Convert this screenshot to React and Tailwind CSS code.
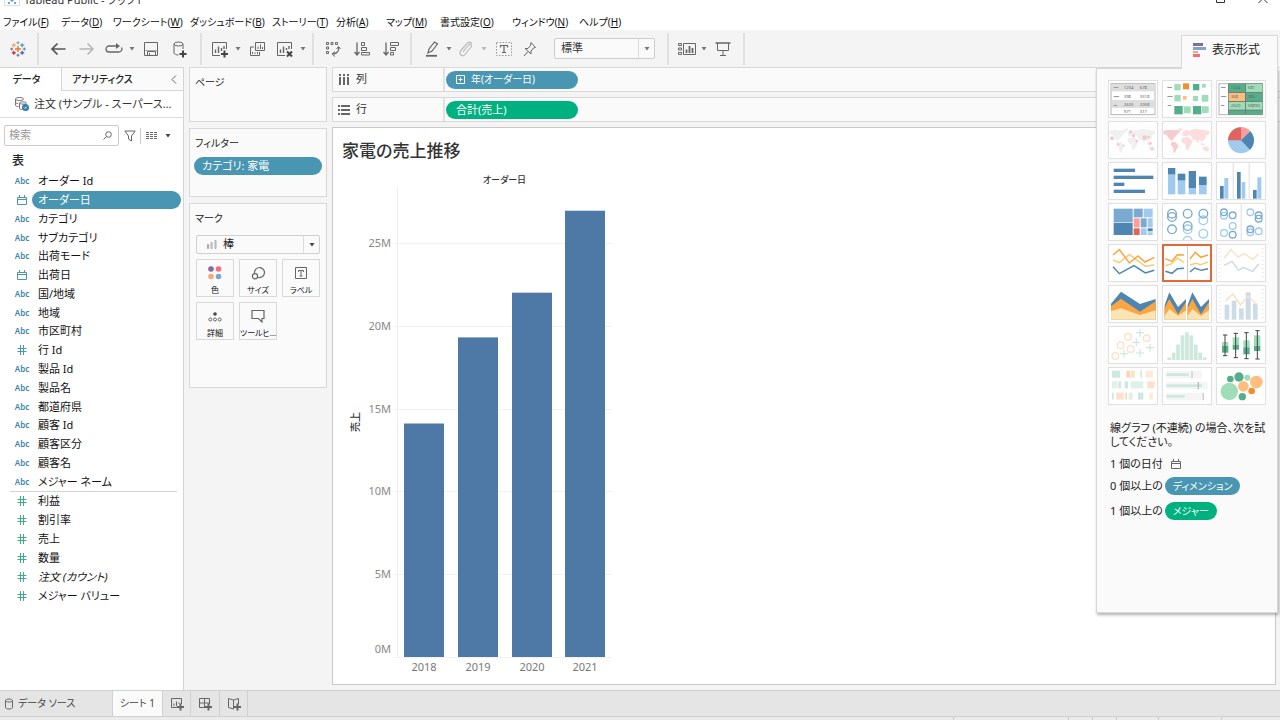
import { useState } from 'react'

const MENUS = [
  { label: 'ファイル', key: 'F' },
  { label: 'データ', key: 'D' },
  { label: 'ワークシート', key: 'W' },
  { label: 'ダッシュボード', key: 'B' },
  { label: 'ストーリー', key: 'T' },
  { label: '分析', key: 'A' },
  { label: 'マップ', key: 'M' },
  { label: '書式設定', key: 'O' },
  { label: 'ウィンドウ', key: 'N' },
  { label: 'ヘルプ', key: 'H' }
]

const DIMENSIONS = [
  { name: 'オーダー Id', type: 'text' },
  { name: 'オーダー日', type: 'date' },
  { name: 'カテゴリ', type: 'text' },
  { name: 'サブカテゴリ', type: 'text' },
  { name: '出荷モード', type: 'text' },
  { name: '出荷日', type: 'date' },
  { name: '国/地域', type: 'text' },
  { name: '地域', type: 'text' },
  { name: '市区町村', type: 'text' },
  { name: '行 Id', type: 'number' },
  { name: '製品 Id', type: 'text' },
  { name: '製品名', type: 'text' },
  { name: '都道府県', type: 'text' },
  { name: '顧客 Id', type: 'text' },
  { name: '顧客区分', type: 'text' },
  { name: '顧客名', type: 'text' },
  { name: 'メジャー ネーム', type: 'text' }
]

const MEASURES = [
  { name: '利益' },
  { name: '割引率' },
  { name: '売上' },
  { name: '数量' },
  { name: '注文 (カウント)', italic: true },
  { name: 'メジャー バリュー' }
]

const SALES = [
  { year: '2018', value: 14.1 },
  { year: '2019', value: 19.3 },
  { year: '2020', value: 22 },
  { year: '2021', value: 26.95 }
]

// ---------- icons ----------

const Icon = ({ w = 16, h = 16, className = 'text-[#666]', children }) => (
  <svg
    width={w}
    height={h}
    viewBox={`0 0 ${w} ${h}`}
    fill="none"
    stroke="currentColor"
    className={`shrink-0 ${className}`}
    aria-hidden="true"
  >
    {children}
  </svg>
)

const Caret = ({ className = 'text-[#777]' }) => (
  <Icon w={6} h={4} className={className}>
    <path d="M.5 0h5L3 3.500z" fill="currentColor" stroke="none" />
  </Icon>
)

const Plus = ({ x, y, color = '#444' }) => (
  <path d={`M${x - 3.5} ${y}h7M${x} ${y - 3.5}v7`} stroke={color} strokeWidth="2" />
)

const CROSSES = [
  { x: 8, y: 8, r: 3, c: '#e8762b', w: 1.4 },
  { x: 3.8, y: 4.2, r: 2, c: '#e8a05a', w: 1.2 },
  { x: 12.2, y: 4.2, r: 2, c: '#5b9aa8', w: 1.2 },
  { x: 3.8, y: 11.8, r: 2, c: '#c72035', w: 1.2 },
  { x: 12.2, y: 11.8, r: 2, c: '#3b5c9a', w: 1.2 },
  { x: 8, y: 1.8, r: 1.6, c: '#6aa3b8', w: 1 },
  { x: 8, y: 14.2, r: 1.6, c: '#6a6fa8', w: 1 },
  { x: 1.7, y: 8, r: 1.5, c: '#7a6a90', w: 1 },
  { x: 14.3, y: 8, r: 1.5, c: '#5b7ab0', w: 1 }
]

const LogoIcon = () => (
  <Icon>
    {CROSSES.map(({ x, y, r, c, w }) => (
      <path key={`${x}-${y}`} d={`M${x - r} ${y}h${r * 2}M${x} ${y - r}v${r * 2}`} stroke={c} strokeWidth={w} />
    ))}
  </Icon>
)

const BackIcon = () => (
  <Icon><path d="M15.500 8H2M7.500 2.500L2 8l5.500 5.500" strokeWidth="1.700" stroke="#555" /></Icon>
)

const ForwardIcon = () => (
  <Icon className="text-[#b4b4b4]"><path d="M.5 8h13M8.500 2.500L14 8l-5.500 5.500" strokeWidth="1.500" /></Icon>
)

const ReplayIcon = () => (
  <Icon w={18} h={12}>
    <path d="M12 3H4a3 3 0 0 0 0 6h10a3 3 0 0 0 2.500-4.500" strokeWidth="1.300" />
    <path d="M11 0l4 3-4 3z" fill="currentColor" stroke="none" />
  </Icon>
)

const SaveIcon = () => (
  <Icon>
    <path d="M1.500 1.500h13v13h-13zM4.500 14.500v-4h8v4M6.500 12v2.500" />
    <path d="M2 9.500h12" stroke="#aaa" />
  </Icon>
)

const DatabaseAddIcon = () => (
  <Icon w={18} h={18}>
    <ellipse cx="7.500" cy="4" rx="4.500" ry="2" />
    <path d="M3 4v9c0 1 2 2 4.500 2M12 4v5" />
    <Plus x={12} y={14} />
  </Icon>
)

const SheetAddIcon = () => (
  <Icon w={18} h={18}>
    <path d="M9 15.500H1.500v-13h14V9" />
    <path d="M4.500 13V9.500M7.500 13V6.500M10.500 11V8M13 9V6" strokeWidth="1.400" />
    <Plus x={13.5} y={14} />
  </Icon>
)

const DuplicateIcon = () => (
  <Icon>
    <path d="M6.500 1.500h9v8h-9zM5 6H1.500v8.500h9V11" />
    <path d="M9 8V5.500M11.500 8V3.500M13.500 8V6M3.500 13v-2M6 13v-1.500M8.500 13v-2" />
  </Icon>
)

const ClearIcon = () => (
  <Icon w={18} h={18}>
    <path d="M9 15.500H1.500v-13h14V9" />
    <path d="M4.500 13V9.500M7.500 13V6.500M10.500 10V8M13 9V6" strokeWidth="1.400" />
    <path d="M11 11.500l5 5M16 11.500l-5 5" stroke="#444" strokeWidth="2" />
  </Icon>
)

const SwapIcon = () => (
  <Icon>
    <path d="M1.500 1.500h2v2h-2zM6 1.500h2v2H6zM10.500 1.500h2v2h-2zM1.500 6h2v2h-2zM1.500 10.500h2v2h-2z" />
    <path d="M13.500 6c1 4-2 7-6 7" strokeWidth="1.200" />
    <path d="M10 10.500L7 13l3 2.500M11.500 8l2-2.500 2 2.500" />
  </Icon>
)

const SortAscIcon = () => (
  <Icon>
    <path d="M3 1.500V14M.5 11L3 14l2.500-3" strokeWidth="1.300" />
    <path d="M7.500 1.500h3v3h-3zM7.500 6.500h5v3h-5zM7.500 11.500h8v2.500h-8z" />
  </Icon>
)

const SortDescIcon = () => (
  <Icon>
    <path d="M3 1.500V14M.5 11L3 14l2.500-3" strokeWidth="1.300" />
    <path d="M7.500 1.500h8v3h-8zM7.500 6.500h5v3h-5zM7.500 11.500h3v2.500h-3z" />
  </Icon>
)

const PenIcon = () => (
  <Icon>
    <path d="M4 12l1-4 5.500-7 3 2L8 10z" strokeWidth="1.200" />
    <path d="M2 14.800h11" strokeWidth="1.800" />
  </Icon>
)

const ClipIcon = () => (
  <Icon className="text-[#b8b8b8]">
    <path d="M5 11l5.500-7a1.500 1.500 0 0 1 2.500 2l-6 7.500a2.800 2.800 0 0 1-4.500-3.500L8.500 3a3.600 3.600 0 0 1 5.500-.5" strokeWidth="1.200" />
  </Icon>
)

const TextIcon = () => (
  <Icon>
    <path d="M.5 1.500h15v13H.5z" strokeDasharray="1.500 1.500" stroke="#999" />
    <path d="M4.500 6.500v-2h7v2M8 4.500v7M6 11.500h4" strokeWidth="1.200" />
  </Icon>
)

const PinIcon = () => (
  <Icon w={14} h={16}>
    <path d="M8 1.500l4.500 5-2 .5-2.500 3v3L2 7.500h3l2.500-3zM5 10.500L1 15" />
  </Icon>
)

const CardsIcon = () => (
  <Icon w={20} h={14}>
    <path d="M1.500 1.500h3v2h-3zM1.500 6h3v2h-3zM1.500 10.500h3v2h-3zM6.500 1.500h12v11h-12z" />
    <path d="M9.500 11V7.500M12.500 11V4M15.500 11V6" strokeWidth="1.800" />
  </Icon>
)

const PresentIcon = () => (
  <Icon>
    <path d="M.5 2h15" strokeWidth="1.500" />
    <path d="M2.500 2v7.500h11V2M8 9.500V14M5 14.500h6" />
  </Icon>
)

const CalendarIcon = ({ className }) => (
  <Icon w={10} h={10} className={className}>
    <path d="M.5 2.500h9v7h-9zM.5 4.500h9M2.500 0v2.500M7.500 0v2.500" />
  </Icon>
)

const HashIcon = ({ className }) => (
  <Icon w={10} h={10} className={className}>
    <path d="M3.500 0v10M6.500 0v10M.5 3.500h9M.5 6.500h9" />
  </Icon>
)

const ShowMeIcon = () => (
  <Icon w={14} h={14}>
    <g stroke="none">
      <path d="M1 0h10v3H1z" fill="#85689c" />
      <path d="M1 4h13v3H1z" fill="#7da5cf" />
      <path d="M1 8h5v2H1z" fill="#f8a878" />
      <path d="M1 11h7v3H1z" fill="#fb6a7b" />
    </g>
  </Icon>
)

// ---------- toolbar ----------

const ToolGroup = ({ className = '', children }) => (
  <div className={`flex h-8 items-center border-r-2 border-[#e0e0e0] ${className}`}>{children}</div>
)

const Tool = ({ label, className, children }) => (
  <button type="button" aria-label={label} className={`flex h-7 shrink-0 items-center justify-center ${className}`}>
    {children}
  </button>
)

const TitleBar = () => (
  <header className="flex h-3.5 items-end justify-between overflow-hidden bg-white pr-3 pb-1.5 pl-1">
    <div className="flex items-center gap-1">
      <div className="border border-[#ddd] px-0.5">
        <Icon w={10} h={10}>
          <path d="M5 3v4M3 5h4M2 1v2M8 1v2M2 7v2M8 7v2M1 2h2M7 2h2M1 8h2M7 8h2" stroke="#3f86b8" />
        </Icon>
      </div>
      <span className="text-[11px] leading-4 text-[#333]">Tableau Public - ブック1</span>
    </div>
    <div className="flex items-end gap-8">
      <button type="button" aria-label="最大化">
        <Icon w={10} h={14}><path d="M.5.500h8v8h-8z" stroke="#333" /></Icon>
      </button>
      <button type="button" aria-label="閉じる">
        <Icon w={10} h={14}><path d="M.5 0l9 9M9.500 0l-9 9" stroke="#333" /></Icon>
      </button>
    </div>
  </header>
)

const MenuBar = () => (
  <nav className="grid h-4 grid-cols-[58px_52px_77px_82px_64px_50px_54px_72px_67px_auto] justify-start bg-white pl-[3px]">
    {MENUS.map(({ label, key }) => (
      <button key={key} type="button" className="text-left text-[10px] leading-4 whitespace-nowrap text-[#111]">
        {label}(<u>{key}</u>)
      </button>
    ))}
  </nav>
)

const Toolbar = () => (
  <div className="flex h-[37px] shrink-0 items-center">
    <ToolGroup className="pr-px">
      <Tool label="スタート ページ" className="w-9"><LogoIcon /></Tool>
    </ToolGroup>
    <ToolGroup className="pr-1.5 pl-[5px]">
      <Tool label="元に戻す" className="w-7"><BackIcon /></Tool>
      <Tool label="やり直し" className="w-[29px]"><ForwardIcon /></Tool>
      <Tool label="リプレイ" className="w-[26px]"><ReplayIcon /></Tool>
      <Tool label="リプレイのオプション" className="w-2.5"><Caret /></Tool>
      <Tool label="保存" className="w-7"><SaveIcon /></Tool>
      <Tool label="新しいデータ ソース" className="w-[29px]"><DatabaseAddIcon /></Tool>
    </ToolGroup>
    <ToolGroup className="px-1">
      <Tool label="新しいワークシート" className="w-7"><SheetAddIcon /></Tool>
      <Tool label="新規作成のオプション" className="w-2"><Caret /></Tool>
      <Tool label="複製" className="w-[30px]"><DuplicateIcon /></Tool>
      <Tool label="シートのクリア" className="w-[26px]"><ClearIcon /></Tool>
      <Tool label="クリアのオプション" className="w-2.5"><Caret /></Tool>
    </ToolGroup>
    <ToolGroup className="px-1">
      <Tool label="行と列の交換" className="w-[30px]"><SwapIcon /></Tool>
      <Tool label="昇順で並べ替え" className="w-7"><SortAscIcon /></Tool>
      <Tool label="降順で並べ替え" className="w-[30px]"><SortDescIcon /></Tool>
    </ToolGroup>
    <ToolGroup className="pr-3 pl-2">
      <Tool label="ハイライト" className="w-6"><PenIcon /></Tool>
      <Tool label="ハイライトのオプション" className="w-2.5"><Caret /></Tool>
      <Tool label="メンバーのグループ化" className="w-6"><ClipIcon /></Tool>
      <Tool label="グループのオプション" className="w-3"><Caret className="text-[#b8b8b8]" /></Tool>
      <Tool label="マーク ラベルの表示" className="w-7"><TextIcon /></Tool>
      <Tool label="軸の固定" className="w-6"><PinIcon /></Tool>
      <div className="relative ml-3 flex h-[21px] w-[101px] items-center rounded-xs border border-[#ccc] bg-[#fafafa]">
        <select aria-label="適合" className="h-full w-full appearance-none pl-1.5 text-[11px] text-[#333]">
          <option>標準</option>
          <option>幅を合わせる</option>
          <option>高さを合わせる</option>
          <option>ビュー全体</option>
        </select>
        <span className="pointer-events-none absolute inset-y-0 right-0 flex w-4 items-center justify-center border-l border-[#ddd]">
          <Caret />
        </span>
      </div>
    </ToolGroup>
    <ToolGroup className="px-1.5">
      <Tool label="カードの表示" className="w-6"><CardsIcon /></Tool>
      <Tool label="カードのオプション" className="w-2.5"><Caret /></Tool>
      <Tool label="プレゼンテーション モード" className="w-7"><PresentIcon /></Tool>
    </ToolGroup>
  </div>
)

// ---------- data pane ----------

const FieldIcon = ({ type, measure }) => {
  if (type === 'date') return <CalendarIcon className="text-[#4996b2]" />
  if (type === 'number') return <HashIcon className={measure ? 'text-[#3fae86]' : 'text-[#4996b2]'} />
  return <span className="text-[8px] font-semibold text-[#3a86a4]">Abc</span>
}

const Field = ({ name, type, measure, italic, selected, onSelect }) => (
  <li className="flex items-center pr-0.5">
    <span className="flex w-8 shrink-0 items-center justify-center pl-3">
      <FieldIcon type={type} measure={measure} />
    </span>
    <button
      type="button"
      onClick={onSelect}
      className={`h-[18px] min-w-0 flex-1 rounded-full pl-1.5 text-left text-[11px] leading-[18px] whitespace-nowrap ${
        selected ? 'bg-[#4996b2] text-white' : 'text-[#111]'
      } ${italic ? 'italic' : ''}`}
    >
      {name}
    </button>
  </li>
)

const DataPane = () => {
  const [selected, setSelected] = useState('オーダー日')

  return (
    <aside className="w-[184px] shrink-0 border-r border-[#d4d4d4] bg-white">
      <div className="flex h-6 border-t border-[#d4d4d4] text-[10px] font-medium">
        <button type="button" className="w-[61px] pr-2 text-[#222]">データ</button>
        <div className="flex flex-1 items-center justify-between border-b border-l border-[#d4d4d4] bg-[#fafafa] pr-1.5 pl-2.5">
          <button type="button" className="whitespace-nowrap text-[#222]">アナリティクス</button>
          <button type="button" aria-label="ペインを折りたたむ">
            <Icon w={6} h={9}><path d="M5 .5l-4 4 4 4" /></Icon>
          </button>
        </div>
      </div>

      <button type="button" className="flex h-[27px] w-full items-center gap-1 border-b border-[#ddd] pl-3.5 text-[11px] whitespace-nowrap text-[#333]">
        <Icon>
          <path d="M1.500 3v6c0 1 1 1.500 3 1.500M1.500 3c0-2 8-2 8 0s-8 2-8 0M1.500 6c0 1 1 1.500 2.500 1.500" stroke="#777" />
          <path d="M5.500 7v5c0 1 1 1.500 3 1.500M5.500 7c0-1.500 7-1.500 7 0s-7 1.500-7 0" stroke="#777" />
          <circle cx="11.500" cy="11.500" r="3.500" fill="#2f7fa8" stroke="none" />
          <path d="M10 11.500l1 1 2-2" stroke="#fff" />
        </Icon>
        注文 (サンプル - スーパース…
      </button>

      <div className="flex items-center pt-[7px] pl-1">
        <label className="flex h-[21px] w-[115px] items-center rounded-xs border border-[#ccc] pr-1.5 pl-1">
          <input type="text" aria-label="検索" placeholder="検索" className="min-w-0 flex-1 text-[11px] outline-none placeholder:text-[#999]" />
          <Icon w={9} h={9}><circle cx="5.500" cy="3.500" r="2.800" /><path d="M3.500 5.500L.5 8.500" /></Icon>
        </label>
        <button type="button" aria-label="フィルター" className="flex w-[22px] justify-center border-r border-[#ccc] py-0.5">
          <Icon w={12} h={12}><path d="M.8 1h10.400L7.500 6v5L4.500 9V6z" /></Icon>
        </button>
        <button type="button" aria-label="表示" className="flex w-[30px] items-center justify-between pl-[5px]">
          <Icon w={12} h={8}>
            <path d="M0 .500h12M0 2.500h12M0 4.500h12M0 6.500h12" strokeDasharray="3 1 3 1" />
          </Icon>
          <Caret className="text-[#444]" />
        </button>
      </div>

      <h2 className="pt-[5px] pb-px pl-3 text-[12px] leading-5 font-medium text-[#222]">表</h2>
      <ul className="grid h-[319px] auto-rows-fr">
        {DIMENSIONS.map((f) => (
          <Field key={f.name} {...f} selected={selected === f.name} onSelect={() => setSelected(f.name)} />
        ))}
      </ul>
      <hr className="mr-1.5 ml-2.5 border-[#d4d4d4]" />
      <ul className="grid h-[113px] auto-rows-fr">
        {MEASURES.map((f) => (
          <Field key={f.name} {...f} type="number" measure selected={selected === f.name} onSelect={() => setSelected(f.name)} />
        ))}
      </ul>
    </aside>
  )
}

// ---------- cards ----------

const Card = ({ title, className, children }) => (
  <section className={`border border-[#d8d8d8] bg-[#fafafa] px-1 text-[11px] ${className}`}>
    <h2 className="px-px pt-[5px] text-[10px] leading-[18px] text-[#222]">{title}</h2>
    {children}
  </section>
)

const MarkButton = ({ label, children }) => (
  <button type="button" className="flex h-[38px] flex-col items-center justify-between border border-[#d8d8d8] bg-[#fafafa] pt-1.5">
    {children}
    <span className="text-[8px] leading-3 whitespace-nowrap text-[#111]">{label}</span>
  </button>
)

const CardColumn = () => (
  <div className="flex w-[138px] shrink-0 flex-col gap-1.5">
    <Card title="ページ" className="h-[55px]" />
    <Card title="フィルター" className="h-[69px]">
      <button type="button" className="mt-[5px] h-[18px] w-full rounded-full bg-[#4996b2] pl-2 text-left leading-[18px] text-white">
        カテゴリ: 家電
      </button>
    </Card>
    <Card title="マーク" className="h-[185px]">
      <div className="px-0.5 pt-2">
        <div className="relative flex h-[19px] items-center rounded-xs border border-[#d0d0d0] bg-[#fafafa]">
          <Icon w={10} h={9} className="ml-2.5 text-[#aaa]">
            <path d="M.5 8.500v-4h1v4zM4 8.500v-6h1v6zM8 8.500V.5h1v8z" />
          </Icon>
          <select aria-label="マーク タイプ" className="h-full min-w-0 flex-1 appearance-none pl-1.5 text-[11px] text-[#222]">
            <option>棒</option>
            <option>線</option>
            <option>円</option>
          </select>
          <span className="pointer-events-none absolute inset-y-0 right-0 flex w-4 items-center justify-center border-l border-[#ddd]">
            <Caret className="text-[#444]" />
          </span>
        </div>
        <div className="mt-[5px] grid grid-cols-3 gap-[5px]">
          <MarkButton label="色">
            <Icon w={14} h={14}>
              <g stroke="none">
                <circle cx="3" cy="3" r="2.800" fill="#85689c" />
                <circle cx="10.500" cy="3" r="2.800" fill="#fb6a7b" />
                <circle cx="3" cy="10.500" r="2.800" fill="#f8a878" />
                <circle cx="10.500" cy="10.500" r="2.800" fill="#7da5cf" />
              </g>
            </Icon>
          </MarkButton>
          <MarkButton label="サイズ">
            <Icon w={14} h={14}>
              <path d="M3.500 7A5 5 0 1 1 7 11.300" strokeWidth="1.200" />
              <circle cx="4" cy="10.300" r="2.600" strokeWidth="1.200" />
            </Icon>
          </MarkButton>
          <MarkButton label="ラベル">
            <Icon w={14} h={14}>
              <path d="M1.500 1.500h11v11h-11zM4.500 6V4.500h5V6M7 4.500v5.500M5.500 10h3" />
            </Icon>
          </MarkButton>
          <MarkButton label="詳細">
            <Icon w={14} h={14}>
              <circle cx="7" cy="5" r="1.800" fill="#444" stroke="none" />
              <circle cx="2.300" cy="10.500" r="1.500" />
              <circle cx="7" cy="10.500" r="1.500" />
              <circle cx="11.700" cy="10.500" r="1.500" />
            </Icon>
          </MarkButton>
          <MarkButton label="ツールヒ…">
            <Icon w={14} h={14}>
              <path d="M1 1.500h12v8h-2V13L7.500 9.500H1z" strokeWidth="1.200" />
            </Icon>
          </MarkButton>
        </div>
      </div>
    </Card>
  </div>
)

// ---------- view ----------

const Shelf = ({ label, icon, children }) => (
  <div className="flex h-[25px] shrink-0 items-center border border-r-0 border-[#d8d8d8] bg-[#fafafa] text-[11px]">
    <div className="flex h-full w-[112px] items-center gap-1.5 border-r-2 border-[#e2e2e2] pl-[5px] text-[#333]">
      {icon}
      {label}
    </div>
    {children}
  </div>
)

const BarChart = () => {
  const left = 56
  const right = 271
  const top = 22
  const bottom = 492
  const perMillion = 16.56
  const step = (right - left) / SALES.length

  return (
    <svg width="272" height="512" viewBox="0 0 272 512" role="img" aria-label="家電の売上推移">
      <text x={(left + right) / 2} y="18" textAnchor="middle" fontSize="9" fontWeight="500" fill="#333">オーダー日</text>
      <text transform="translate(18 257) rotate(-90)" textAnchor="middle" fontSize="10" fontWeight="500" fill="#333">売上</text>
      {[0, 5, 10, 15, 20, 25].map((tick) => {
        const y = Math.round(bottom - tick * perMillion)
        return (
          <g key={tick}>
            <path d={`M${left - 4} ${y + 0.5}H${right}`} stroke="#f2f2f2" />
            <text x={left - 6} y={tick === 0 ? y - 4 : y + 4} textAnchor="end" fontSize="11" fill="#888">{tick}M</text>
          </g>
        )
      })}
      <path d={`M${left + 0.5} ${top}V${bottom}`} stroke="#eee" />
      {SALES.map(({ year, value }, i) => {
        const x = Math.round(left + step * i + 7)
        const height = value * perMillion
        return (
          <g key={year}>
            <rect x={x} y={bottom - height} width="40" height={height} fill="#4e79a7" />
            <text x={x + 20} y={bottom + 14} textAnchor="middle" fontSize="11" fill="#777">{year}</text>
          </g>
        )
      })}
    </svg>
  )
}

const Worksheet = () => (
  <main className="flex min-w-0 flex-1 flex-col gap-[5px]">
    <Shelf
      label="列"
      icon={
        <Icon w={12} h={12}>
          <path d="M2 0v2M6 0v2M10 0v2M2 3v8M6 3v8M10 3v8" strokeWidth="2" />
        </Icon>
      }
    >
      <button type="button" className="ml-px flex h-[18px] w-[132px] items-center gap-1.5 rounded-full bg-[#4996b2] pl-2.5 text-[10px] text-white">
        <Icon w={9} h={9} className="text-white"><path d="M.5.500h8v8h-8zM2.500 4.500h4M4.500 2.500v4" /></Icon>
        年(オーダー日)
      </button>
    </Shelf>
    <Shelf
      label="行"
      icon={
        <Icon w={12} h={12}>
          <path d="M0 2h2M0 6h2M0 10h2M3 2h9M3 6h9M3 10h9" strokeWidth="2" />
        </Icon>
      }
    >
      <button type="button" className="ml-px h-[18px] w-[132px] rounded-full bg-[#00b180] pl-2.5 text-left leading-[18px] text-white">
        合計(売上)
      </button>
    </Shelf>
    <section className="mr-1 mb-[5px] flex-1 border border-[#c8c8c8] bg-white px-2 pt-[9px]">
      <h1 className="h-7 pl-px text-[17px] leading-7 font-medium text-[#333]">家電の売上推移</h1>
      <BarChart />
    </section>
  </main>
)

// ---------- show me ----------

const DARK = '#4e85b3'
const MID = '#7aaad0'
const LIGHT = '#a0cbef'
const GREEN = '#55ae8b'
const PALE_GREEN = '#9fdcb8'
const ORANGE = '#f28e2b'
const PALE_ORANGE = '#ffbe7d'
const FADED_GREEN = '#cde8dc'
const FADED_ORANGE = '#fde0c8'
const FADED_BLUE = '#cddbe8'

const Rects = ({ items }) =>
  items.map(([x, y, width, height, fill], i) => <rect key={i} x={x} y={y} width={width} height={height} fill={fill} />)

const Rings = ({ items, r }) =>
  items.map(([cx, cy, stroke], i) => <circle key={i} cx={cx} cy={cy} r={r} stroke={stroke} strokeWidth="4" fill="none" />)

const Lines = ({ items }) =>
  items.map(([points, stroke], i) => <polyline key={i} points={points} stroke={stroke} strokeWidth="4.500" fill="none" />)

const Areas = ({ items }) => items.map(([points, fill], i) => <polygon key={i} points={points} fill={fill} />)

const Digits = ({ items }) =>
  items.map(([x, y, text], i) => (
    <text key={i} x={x} y={y} fontSize="13" fill="#666">{text}</text>
  ))

const WORLD = [
  '4,30 18,26 34,28 46,27 54,32 44,42 36,52 30,60 22,54 14,42 4,38',
  '46,24 58,22 62,25 54,32',
  '28,62 40,64 50,74 44,84 38,96 34,94 34,80 27,72',
  '64,30 74,26 84,30 84,40 74,46 62,44 60,38',
  '62,50 78,48 88,56 92,62 84,76 78,88 72,86 70,70 60,64 58,56',
  '84,28 100,24 122,26 142,30 142,38 134,42 130,52 120,62 112,56 108,68 102,56 92,56 88,46 82,42',
  '118,66 128,70 124,74 116,70',
  '122,78 134,76 142,84 138,92 124,88'
]

const CHART_TYPES = [
  {
    label: 'テキスト テーブル',
    art: (
      <>
        <rect x="9" y="11" width="132" height="93" fill="#fff" stroke="#b4b4b4" strokeWidth="3" />
        <Rects items={[[11, 12, 129, 22, '#dedede'], [11, 60, 129, 24, '#dedede'], [17, 21, 14, 3, '#999'], [17, 48, 16, 3, '#999'], [17, 75, 11, 3, '#999']]} />
        <Digits items={[[47, 28, '1234'], [95, 28, '678'], [47, 54, '398'], [95, 54, '3518'], [47, 78, '2620'], [95, 78, '2058'], [47, 99, '971'], [95, 99, '317']]} />
      </>
    )
  },
  {
    label: 'ヒート マップ',
    art: (
      <Rects
        items={[
          [16, 21, 14, 3, '#999'], [16, 48, 16, 3, '#999'], [17, 75, 10, 3, '#999'],
          [37, 12, 19, 19, PALE_GREEN], [63, 10, 18, 18, ORANGE], [93, 12, 19, 19, GREEN], [120, 12, 11, 11, PALE_GREEN],
          [37, 45, 19, 19, PALE_GREEN], [63, 48, 11, 11, PALE_ORANGE], [93, 48, 15, 15, PALE_GREEN], [119, 45, 20, 20, PALE_GREEN],
          [37, 78, 25, 25, GREEN], [65, 79, 21, 21, PALE_GREEN], [93, 78, 25, 25, GREEN], [120, 79, 20, 20, PALE_GREEN]
        ]}
      />
    )
  },
  {
    label: 'ハイライト表',
    art: (
      <>
        <rect x="9" y="11" width="131" height="93" fill="#fff" stroke="#b4b4b4" strokeWidth="3" />
        <Rects
          items={[
            [15, 21, 14, 3, '#999'], [15, 48, 16, 3, '#999'], [15, 75, 10, 3, '#999'],
            [36, 10, 104, 94, '#6f8078'],
            [38, 12, 49, 24, GREEN], [90, 12, 49, 24, PALE_GREEN],
            [38, 39, 49, 24, PALE_ORANGE], [90, 39, 49, 24, GREEN],
            [38, 66, 49, 23, PALE_GREEN], [90, 66, 49, 23, PALE_GREEN],
            [38, 92, 49, 11, GREEN], [90, 92, 49, 11, GREEN]
          ]}
        />
        <Digits items={[[44, 28, '1234'], [95, 28, '581'], [44, 55, '368'], [95, 55, '380'], [44, 82, '2620'], [95, 82, '58890']]} />
      </>
    )
  },
  {
    label: '記号マップ',
    art: (
      <>
        <Areas items={WORLD.map((p) => [p, '#f0f0f0'])} />
        <g fill="#f4c9cc">
          <circle cx="12" cy="52" r="6" />
          <circle cx="67" cy="33" r="5" />
          <circle cx="77" cy="44" r="5" />
          <circle cx="30" cy="70" r="4" />
          <circle cx="86" cy="60" r="4" />
          <circle cx="110" cy="50" r="7" />
          <circle cx="126" cy="67" r="5" />
          <circle cx="122" cy="48" r="4" />
          <circle cx="132" cy="83" r="4" />
          <circle cx="47" cy="74" r="3" />
        </g>
      </>
    )
  },
  {
    label: '塗りつぶしマップ',
    art: <Areas items={WORLD.map((p, i) => [p, i % 2 === 0 && i < 3 ? '#f6cccc' : '#fcdcdc'])} />
  },
  {
    label: '円グラフ',
    art: (
      <>
        <circle cx="75" cy="58" r="39" fill={LIGHT} />
        <path d="M75 58L36 58A39 39 0 0 1 75 19z" fill="#e0635c" />
        <path d="M75 58L75 19A39 39 0 0 1 103 31z" fill="#ff9d9a" />
        <path d="M75 58L103 31A39 39 0 0 1 102 86z" fill={DARK} />
      </>
    )
  },
  {
    label: '水平棒',
    art: <Rects items={[[17, 20, 64, 10, DARK], [17, 41, 119, 10, DARK], [17, 62, 32, 10, DARK], [17, 83, 94, 10, DARK]]} />
  },
  {
    label: '積み上げ棒',
    art: (
      <Rects
        items={[
          [18, 18, 22, 20, DARK], [18, 38, 22, 59, LIGHT],
          [47, 35, 23, 21, DARK], [47, 56, 23, 41, LIGHT],
          [80, 27, 22, 51, DARK], [80, 78, 22, 19, LIGHT],
          [111, 44, 23, 25, DARK], [111, 69, 23, 28, LIGHT]
        ]}
      />
    )
  },
  {
    label: '並列棒',
    art: (
      <Rects
        items={[
          [50, 0, 3, 114, '#ddd'], [98, 0, 3, 114, '#ddd'],
          [12, 72, 11, 38, DARK], [25, 48, 12, 62, LIGHT],
          [63, 30, 11, 80, DARK], [77, 60, 11, 50, LIGHT],
          [111, 84, 11, 26, DARK], [124, 46, 12, 64, LIGHT]
        ]}
      />
    )
  },
  {
    label: 'ツリーマップ',
    art: (
      <Rects
        items={[
          [17, 17, 57, 40, MID], [17, 59, 57, 37, DARK], [77, 17, 27, 26, MID], [107, 17, 27, 26, LIGHT],
          [77, 46, 18, 27, '#ff9d9a'], [77, 76, 18, 20, '#e0635c'], [98, 46, 18, 27, MID], [119, 46, 15, 27, LIGHT],
          [98, 76, 18, 20, LIGHT], [119, 76, 15, 9, DARK], [119, 88, 15, 8, LIGHT]
        ]}
      />
    )
  },
  {
    label: '円ビュー',
    art: (
      <Rings
        r={13}
        items={[
          [124, 52, LIGHT], [124, 92, LIGHT], [77, 113, LIGHT],
          [30, 32, MID], [30, 42, MID], [30, 79, MID], [77, 32, MID], [77, 79, LIGHT], [77, 69, MID], [124, 32, MID]
        ]}
      />
    )
  },
  {
    label: '並列円',
    art: (
      <>
        <Rects items={[[74, 0, 3, 114, '#ddd']]} />
        <Rings
          r={10}
          items={[
            [24, 38, LIGHT], [50, 69, LIGHT], [24, 90, LIGHT], [103, 28, LIGHT], [103, 88, LIGHT], [128, 85, LIGHT],
            [24, 28, MID], [50, 37, MID], [50, 95, MID], [128, 37, MID], [128, 47, MID], [103, 79, MID]
          ]}
        />
      </>
    )
  },
  {
    label: '線 (連続)',
    art: (
      <Lines
        items={[
          ['15,48 34,56 64,31 112,67 139,62', '#f7cf78'],
          ['15,33 34,17 64,57 90,36 111,54 139,40', '#fba543'],
          ['15,68 34,89 78,65 112,87 139,79', DARK]
        ]}
      />
    )
  },
  {
    label: '線 (不連続)',
    selected: true,
    art: (
      <>
        <Rects items={[[75, 0, 3, 114, '#ccc']]} />
        <Lines
          items={[
            ['10,65 30,59 46,42 66,55', '#f7cf78'], ['84,63 102,58 115,62 138,54', '#f7cf78'],
            ['10,44 30,52 46,32 66,33', '#fba543'], ['84,45 100,25 116,40 138,33', '#fba543'],
            ['10,82 30,88 46,74 66,73', DARK], ['84,84 98,72 118,79 138,74', DARK]
          ]}
        />
      </>
    )
  },
  {
    label: '二重線',
    art: (
      <>
        <path d="M10 12v90M140 12v90" stroke="#e4e4e4" strokeWidth="6" strokeDasharray="2 10" />
        <Lines
          items={[
            ['24,43 45,17 66,39 84,29 110,46 128,30', FADED_ORANGE],
            ['24,64 48,52 68,79 82,70 110,82 128,60', FADED_BLUE]
          ]}
        />
      </>
    )
  },
  {
    label: '面 (連続)',
    art: (
      <Areas
        items={[
          ['9,56 39,20 96,57 143,42 143,104 9,104', DARK],
          ['9,64 39,41 96,80 143,49 143,104 9,104', '#fba543'],
          ['9,78 39,70 96,90 143,76 143,104 9,104', '#fae3b4']
        ]}
      />
    )
  },
  {
    label: '面 (不連続)',
    art: (
      <Areas
        items={[
          ['8,60 22,22 48,66 72,42 72,104 8,104', DARK],
          ['8,68 22,42 48,88 72,52 72,104 8,104', '#fba543'],
          ['8,92 22,72 48,92 72,76 72,104 8,104', '#fae3b4'],
          ['77,60 91,22 117,66 141,42 141,104 77,104', DARK],
          ['77,68 91,42 117,88 141,52 141,104 77,104', '#fba543'],
          ['77,92 91,72 117,92 141,76 141,104 77,104', '#fae3b4']
        ]}
      />
    )
  },
  {
    label: '二重の組み合わせ',
    art: (
      <>
        <path d="M10 12v90M140 12v90" stroke="#e4e4e4" strokeWidth="6" strokeDasharray="2 10" />
        <Rects
          items={[
            [26, 59, 14, 45, FADED_BLUE], [47, 47, 14, 57, FADED_BLUE], [69, 70, 14, 34, FADED_BLUE],
            [89, 22, 15, 82, FADED_BLUE], [111, 56, 14, 48, FADED_BLUE]
          ]}
        />
        <Lines items={[['29,48 50,27 74,60 96,33 124,60', FADED_ORANGE]]} />
      </>
    )
  },
  {
    label: '散布図',
    art: (
      <>
        <Rings
          r={10}
          items={[[60, 32, FADED_ORANGE], [116, 37, FADED_ORANGE], [38, 58, FADED_ORANGE], [68, 69, FADED_ORANGE], [22, 90, FADED_ORANGE]]}
        />
        <path
          d="M84 20h24M96 8v24M73 49h24M85 37v24M114 65h24M126 53v24M36 83h24M48 71v24M84 81h24M96 69v24"
          stroke={FADED_GREEN}
          strokeWidth="3.500"
        />
      </>
    )
  },
  {
    label: 'ヒストグラム',
    art: (
      <Rects
        items={[94, 80, 56, 28, 19, 28, 56, 80, 94].map((top, i) => [16 + i * 13.3, top, 11, 102 - top, FADED_GREEN])}
      />
    )
  },
  {
    label: '箱ヒゲ図',
    art: (
      <>
        <Rects
          items={[
            [18, 48, 19, 14, PALE_GREEN], [18, 60, 19, 20, GREEN],
            [50, 34, 19, 24, PALE_GREEN], [50, 57, 19, 14, GREEN],
            [82, 43, 19, 22, PALE_GREEN], [82, 64, 19, 21, GREEN],
            [114, 28, 19, 33, PALE_GREEN], [114, 60, 19, 15, GREEN]
          ]}
        />
        <path
          d="M27 27v62M21 27h13M21 89h13M59 22v73M53 22h13M53 95h13M91 20v78M85 20h13M85 98h13M124 14v85M118 14h13M118 99h13"
          stroke="#444"
          strokeWidth="3"
        />
      </>
    )
  },
  {
    label: 'ガント チャート',
    art: (
      <Rects
        items={[
          [12, 11, 24, 21, FADED_GREEN], [55, 11, 11, 21, '#fcd5b5'], [68, 11, 12, 21, FADED_ORANGE], [97, 11, 5, 21, FADED_GREEN], [113, 11, 22, 21, '#feead8'],
          [12, 43, 16, 21, '#def2e8'], [31, 43, 8, 21, FADED_GREEN], [50, 43, 10, 21, FADED_GREEN], [68, 43, 38, 21, '#def2e8'], [118, 43, 22, 21, FADED_ORANGE],
          [12, 77, 5, 21, FADED_GREEN], [25, 77, 22, 21, FADED_ORANGE], [52, 77, 5, 21, '#fcd5b5'], [62, 77, 12, 21, '#def2e8'], [90, 77, 16, 21, FADED_GREEN], [124, 77, 11, 21, '#feead8']
        ]}
      />
    )
  },
  {
    label: 'ブレット グラフ',
    art: (
      <Rects
        items={[
          [13, 12, 107, 22, '#f5f5f5'], [13, 45, 124, 22, '#f5f5f5'], [13, 78, 110, 22, '#f5f5f5'],
          [13, 19, 67, 8, FADED_GREEN], [13, 52, 107, 8, FADED_GREEN], [13, 84, 55, 8, FADED_GREEN],
          [88, 12, 4, 22, '#ccc'], [107, 45, 4, 22, '#bbb'], [122, 78, 4, 22, '#ccc']
        ]}
      />
    )
  },
  {
    label: 'パック バブル',
    art: (
      <g>
        <circle cx="40" cy="73" r="26" fill={PALE_GREEN} />
        <circle cx="43" cy="36" r="10" fill={GREEN} />
        <circle cx="69" cy="30" r="14" fill={GREEN} />
        <circle cx="94" cy="32" r="9" fill={PALE_GREEN} />
        <circle cx="121" cy="45" r="19" fill={PALE_ORANGE} />
        <circle cx="82" cy="58" r="16" fill={PALE_ORANGE} />
        <circle cx="107" cy="72" r="10" fill={ORANGE} />
        <circle cx="79" cy="89" r="11" fill={GREEN} />
      </g>
    )
  }
]

const ShowMe = () => (
  <aside className="absolute top-[35px] right-0.5 flex w-[182px] flex-col items-end text-[11px] text-[#222]">
    <button type="button" className="z-10 -mb-px flex h-[34px] w-[97px] items-center gap-1.5 border border-b-0 border-[#d8d8d8] bg-[#fafafa] pb-1.5 pl-2.5 text-[12px]">
      <ShowMeIcon />
      表示形式
    </button>
    <div className="h-[545px] w-full border border-[#d8d8d8] bg-[#fafafa] px-[11px] pt-[11px] shadow-[1px_2px_3px_rgba(0,0,0,0.3)]">
      <div className="grid grid-cols-[50px_50px_50px] gap-x-1 gap-y-[3px]">
        {CHART_TYPES.map(({ label, art, selected }) => (
          <button
            key={label}
            type="button"
            aria-label={label}
            className={`h-[38px] bg-white ${selected ? 'border-2 border-[#e0693a]' : 'border border-[#e0e0e0]'}`}
          >
            <svg viewBox={selected ? '6 6 138 102' : '3 3 144 108'} stroke="none" className="block h-full w-full">{art}</svg>
          </button>
        ))}
      </div>
      <p className="mt-4 pl-0.5 leading-[14px]">線グラフ (不連続) の場合、次を試してください。</p>
      <p className="mt-1 flex h-[22px] items-center gap-2 pl-0.5">
        1 個の日付
        <CalendarIcon className="text-[#666]" />
      </p>
      <p className="flex h-[22px] items-center gap-0.5 pl-0.5">
        0 個以上の
        <span className="h-[18px] rounded-full bg-[#4996b2] px-2 text-[10px] leading-[18px] text-white">ディメンション</span>
      </p>
      <p className="mt-[3px] flex h-[22px] items-center gap-0.5 pl-0.5">
        1 個以上の
        <span className="h-[18px] rounded-full bg-[#00b180] px-2 text-[10px] leading-[18px] text-white">メジャー</span>
      </p>
    </div>
  </aside>
)

// ---------- footer ----------

const SheetTabs = () => (
  <footer className="shrink-0">
    <div className="flex h-[27px] border-y border-[#d0d0d0] bg-[#e5e5e5] text-[10px] text-[#444]">
      <button type="button" className="flex w-[113px] items-center gap-1 border-r border-[#d0d0d0] pl-1">
        <Icon w={10} h={12}>
          <path d="M1.500 2.500v7c0 2 7 2 7 0v-7c0-2-7-2-7 0s7 2 7 0" />
        </Icon>
        データ ソース
      </button>
      <button type="button" className="w-[50px] border-r border-[#d0d0d0] bg-[#fafafa] whitespace-nowrap">シート 1</button>
      <button type="button" aria-label="新しいワークシート" className="flex w-7 items-center justify-center border-r border-[#d0d0d0]">
        <Icon w={14} h={14}>
          <path d="M7 10.500H1.500v-9h10V7M4 9V6.500M6.500 9V4.500M9 7V5.500" />
          <Plus x={10.5} y={10} color="#666" />
        </Icon>
      </button>
      <button type="button" aria-label="新しいダッシュボード" className="flex w-[29px] items-center justify-center border-r border-[#d0d0d0]">
        <Icon w={14} h={14}>
          <path d="M7 10.500H1.500v-9h10V7M1.500 6h10M6.500 1.500v9" />
          <Plus x={10.5} y={10} color="#666" />
        </Icon>
      </button>
      <button type="button" aria-label="新しいストーリー" className="flex w-7 items-center justify-center border-r border-[#d0d0d0]">
        <Icon w={14} h={14}>
          <path d="M6.500 3L1.500 1.500v9l5 1.500zM6.500 3l5-1.500V7M6.500 3v9" />
          <Plus x={10.5} y={10} color="#666" />
        </Icon>
      </button>
    </div>
    <div className="flex h-[3px] justify-end bg-[#ebebeb]">
      <span className="w-[115px] border-l border-[#ccc]" />
      <span className="w-6 border-l border-[#ccc]" />
      <span className="w-6 border-l border-[#ccc]" />
      <span className="w-[42px] border-l border-[#ccc]" />
      <span className="w-[63px] border-l border-[#ccc]" />
      <span className="w-[59px] border-l border-[#ccc]" />
    </div>
  </footer>
)

export default function App() {
  return (
    <div className="relative flex h-screen flex-col overflow-hidden bg-[#f4f4f4] font-['Noto_Sans','Noto_Sans_CJK_JP',sans-serif] [font-feature-settings:'palt']">
      <TitleBar />
      <MenuBar />
      <Toolbar />
      <div className="flex min-h-0 flex-1">
        <DataPane />
        <div className="flex min-w-0 flex-1 gap-[5px] pl-[5px]">
          <CardColumn />
          <Worksheet />
        </div>
      </div>
      <SheetTabs />
      <ShowMe />
    </div>
  )
}
